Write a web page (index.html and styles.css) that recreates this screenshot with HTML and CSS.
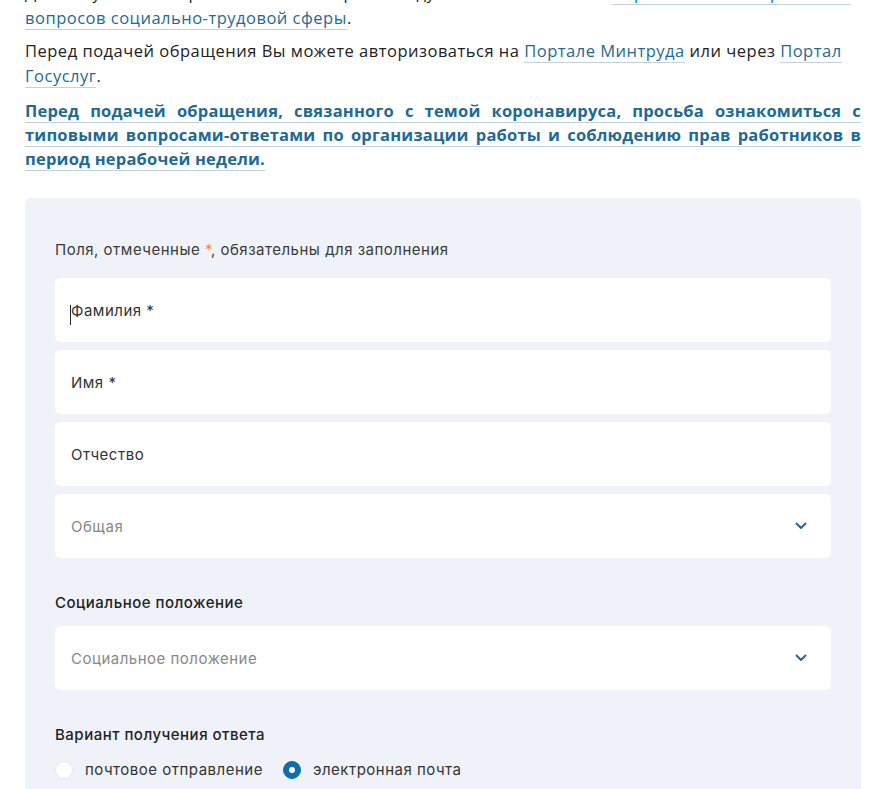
FILE: index.html
```html
<!DOCTYPE html>
<html lang="ru">
<head>
<meta charset="utf-8">
<title>Обращение</title>
<link rel="stylesheet" href="styles.css">
</head>
<body>
<main class="page">
  <div class="intro">
    <p class="para">Для получения оперативного ответа рекомендуем воспользоваться <a class="link" href="#">Справочником по решению</a><br><a class="link" href="#">вопросов социально-трудовой сферы</a>.</p>
    <p class="para">Перед подачей обращения Вы можете авторизоваться на <a class="link" href="#">Портале Минтруда</a> или через <a class="link" href="#">Портал Госуслуг</a>.</p>
    <p class="para para-strong"><a class="link link-strong" href="#">Перед подачей обращения, связанного с темой коронавируса, просьба ознакомиться с типовыми вопросами-ответами по организации работы и соблюдению прав работников в период нерабочей недели.</a></p>
  </div>

  <form class="panel">
    <p class="note">Поля, отмеченные <span class="req">*</span>, обязательны для заполнения</p>
    <div class="fields">
      <div class="field field-dark"><span class="caret"></span>Фамилия *</div>
      <div class="field field-dark">Имя *</div>
      <div class="field field-dark">Отчество</div>
      <div class="field field-select">Общая
        <svg class="chev" width="12" height="8" viewBox="0 0 12 8"><path d="M1.5 1.5 L6 6 L10.5 1.5" fill="none" stroke="#2d6488" stroke-width="2" stroke-linecap="round" stroke-linejoin="round"/></svg>
      </div>
    </div>

    <div class="group">
      <p class="group-label">Социальное положение</p>
      <div class="field field-select">Социальное положение
        <svg class="chev" width="12" height="8" viewBox="0 0 12 8"><path d="M1.5 1.5 L6 6 L10.5 1.5" fill="none" stroke="#2d6488" stroke-width="2" stroke-linecap="round" stroke-linejoin="round"/></svg>
      </div>
    </div>

    <div class="group group-radio">
      <p class="group-label">Вариант получения ответа</p>
      <div class="radios">
        <label class="radio"><span class="dot"></span>почтовое отправление</label>
        <label class="radio radio-on"><span class="dot"></span>электронная почта</label>
      </div>
    </div>
  </form>
</main>
</body>
</html>
```

FILE: styles.css
```css
* { box-sizing: border-box; }
html, body { margin: 0; padding: 0; background: #fff; }
body { overflow: hidden; }

.page {
  width: 836px;
  margin-left: 25px;
}

.intro {
  margin-top: -20px;
  font-family: "Open Sans", "Noto Sans", sans-serif;
  font-size: 16.5px;
  letter-spacing: 0.5px;
  line-height: 25px;
  color: #222;
}

.para { margin: 0 0 8px; }

.link {
  color: #1e6a93;
  text-decoration: none;
  border-bottom: 1px solid #c3d1dc;
}

.para-strong {
  margin-top: 11px;
  text-align: justify;
  line-height: 24px;
  letter-spacing: 0.2px;
}

.link-strong { font-weight: 700; }

.panel {
  margin-top: 27px;
  background: #eff3f9;
  border-radius: 6px;
  padding: 40px 30px 40px;
  font-family: Inter, "Noto Sans", sans-serif;
  font-size: 15px;
  letter-spacing: 0.5px;
  color: #333;
}

.note {
  margin: 0 0 16px;
  line-height: 24px;
  color: #3a3a3a;
}

.req { color: #f08a4b; }

.fields {
  display: flex;
  flex-direction: column;
  gap: 8px;
}

.field {
  position: relative;
  height: 64px;
  background: #fff;
  border-radius: 6px;
  padding: 0 16px;
  display: flex;
  align-items: center;
  color: #888;
}

.field-dark { color: #333; }

.field-select { justify-content: space-between; padding-right: 24px; }

.chev { display: block; }

.caret {
  position: absolute;
  left: 15px;
  top: 27px;
  width: 1px;
  height: 20px;
  background: #222;
}

.group { margin-top: 35px; }

.group-label {
  margin: 0 0 13px;
  line-height: 20px;
  font-weight: 500;
  color: #222;
}

.group-radio .group-label { margin-bottom: 15px; }

.radios {
  display: flex;
  gap: 20px;
}

.radio {
  display: flex;
  align-items: center;
  gap: 12px;
  color: #333;
  line-height: 20px;
}

.dot {
  width: 18px;
  height: 18px;
  border-radius: 50%;
  background: #fff;
  border: 1px solid #e6e9ef;
  position: relative;
}

.radio-on .dot {
  background: #0d6ea9;
  border-color: #0d6ea9;
}

.radio-on .dot::after {
  content: "";
  position: absolute;
  left: 5px;
  top: 5px;
  width: 6px;
  height: 6px;
  border-radius: 50%;
  background: #fff;
}
```
